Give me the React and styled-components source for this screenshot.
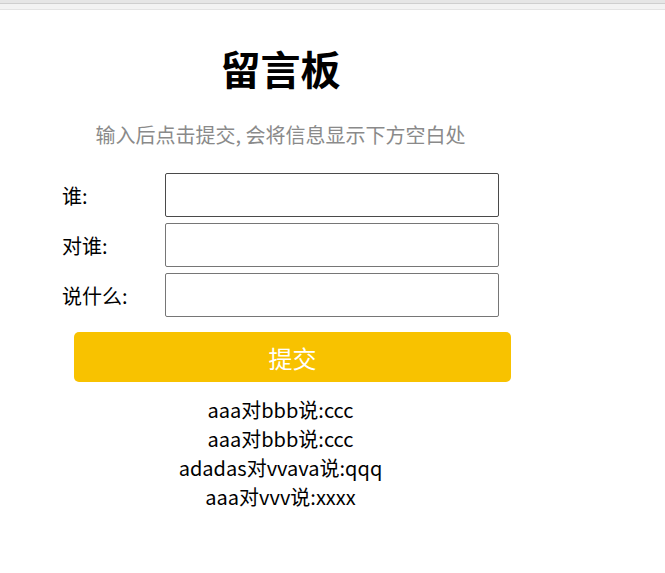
import React, { useState } from "react";
import styled, { createGlobalStyle } from "styled-components";

const GlobalStyle = createGlobalStyle`
  body {
    margin: 0;
    background: #fff;
    font-family: "Noto Sans CJK SC", "Noto Sans", sans-serif;
    color: #000;
  }
`;

const TopStrip = styled.div`
  height: 6px;
  background: #f3f3f3;
  border-top: 3px solid #e6e6e6;
  border-bottom: 1px solid #e4e4e4;
  box-shadow: inset 0 1px 0 #cfcfcf;
`;

const Page = styled.div`
  width: 437px;
  margin-left: 62px;
  display: flex;
  flex-direction: column;
`;

const Title = styled.h1`
  margin: 26px 0 0;
  text-align: center;
  font-size: 40px;
  font-weight: 700;
  line-height: 64px;
`;

const Subtitle = styled.p`
  margin: 21px 0 0;
  text-align: center;
  font-size: 20px;
  color: #8a8a8a;
  line-height: 28px;
`;

const Form = styled.form`
  margin-top: 24px;
  display: flex;
  flex-direction: column;
  gap: 6px;
`;

const Row = styled.label`
  display: flex;
  align-items: center;
`;

const Label = styled.span`
  width: 103px;
  font-size: 20px;
`;

const Input = styled.input`
  box-sizing: border-box;
  width: 334px;
  height: 44px;
  border: 1px solid ${(p) => (p.$active ? "#4a4a4a" : "#767676")};
  border-radius: 2px;
  padding: 0 8px;
  font-size: 18px;
  font-family: inherit;
  outline: none;
`;

const Submit = styled.button`
  margin: 9px 0 0 12px;
  width: 437px;
  height: 50px;
  border: none;
  border-radius: 5px;
  background: #f8c200;
  color: #fff;
  font-family: inherit;
  font-size: 24px;
  cursor: pointer;
`;

const Messages = styled.div`
  margin-top: 13px;
  text-align: center;
  font-size: 20px;
  line-height: 29px;
`;

const initial = [
  { who: "aaa", to: "bbb", say: "ccc" },
  { who: "aaa", to: "bbb", say: "ccc" },
  { who: "adadas", to: "vvava", say: "qqq" },
  { who: "aaa", to: "vvv", say: "xxxx" },
];

export default function App() {
  const [list, setList] = useState(initial);
  const [form, setForm] = useState({ who: "", to: "", say: "" });

  const handleChange = (e) => {
    const { name, value } = e.target;
    setForm((cur) => ({ ...cur, [name]: value }));
  };

  const handleSubmit = (e) => {
    e.preventDefault();
    if (!form.who && !form.to && !form.say) return;
    setList((cur) => [...cur, form]);
    setForm({ who: "", to: "", say: "" });
  };

  return (
    <>
      <GlobalStyle />
      <TopStrip />
      <Page>
        <Title>留言板</Title>
        <Subtitle>输入后点击提交, 会将信息显示下方空白处</Subtitle>
        <Form onSubmit={handleSubmit}>
          <Row>
            <Label>谁:</Label>
            <Input $active name="who" value={form.who} onChange={handleChange} />
          </Row>
          <Row>
            <Label>对谁:</Label>
            <Input name="to" value={form.to} onChange={handleChange} />
          </Row>
          <Row>
            <Label>说什么:</Label>
            <Input name="say" value={form.say} onChange={handleChange} />
          </Row>
          <Submit type="submit">提交</Submit>
        </Form>
        <Messages>
          {list.map((m, i) => (
            <div key={i}>
              {m.who}对{m.to}说:{m.say}
            </div>
          ))}
        </Messages>
      </Page>
    </>
  );
}
